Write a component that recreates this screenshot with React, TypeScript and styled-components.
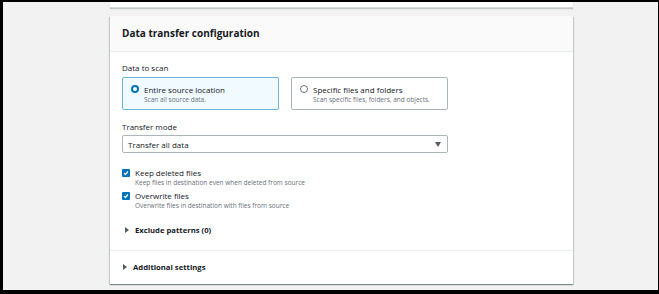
import React, { useState } from 'react';
import styled, { createGlobalStyle } from 'styled-components';

const GlobalStyle = createGlobalStyle`
  html, body {
    margin: 0;
    padding: 0;
    background: #000;
  }
  body {
    font-family: "Open Sans", "Liberation Sans", Arial, sans-serif;
    color: #16191f;
  }
`;

const Frame = styled.div`
  width: 659px;
  height: 294px;
  box-sizing: border-box;
  padding: 2px 1px 4px 3px;
  background: #000;
`;

const Page = styled.div`
  height: 100%;
  background: #f2f2f2;
  padding-left: 107px;
  box-sizing: border-box;
  overflow: hidden;
  display: flex;
  flex-direction: column;
`;

const PrevCard = styled.div`
  width: 463px;
  height: 5px;
  background: #fff;
  border-bottom: 1px solid #d5dbdb;
  box-shadow: 0 1px 1px rgba(0, 27, 42, 0.2);
`;

const Card = styled.section`
  width: 463px;
  margin-top: 8px;
  background: #fff;
  box-shadow: 0 1px 1px 0 rgba(0, 28, 36, 0.3), 1px 1px 1px 0 rgba(0, 28, 36, 0.15), -1px 1px 1px 0 rgba(0, 28, 36, 0.15);
  display: flex;
  flex-direction: column;
`;

const CardHeader = styled.header`
  height: 36px;
  box-sizing: border-box;
  padding: 0 12px 2px;
  display: flex;
  align-items: center;
  background: #fafafa;
  border-bottom: 1px solid #eaeded;
`;

const Title = styled.h2`
  margin: 0;
  font-size: 10px;
  line-height: 14px;
  font-weight: 700;
`;

const Body = styled.div`
  padding: 10px 12px 14px;
  display: flex;
  flex-direction: column;
`;

const Label = styled.div`
  font-size: 8px;
  line-height: 12px;
  margin-bottom: ${(p: { $gap?: number }) => p.$gap ?? 2}px;
`;

const Tiles = styled.div`
  display: grid;
  grid-template-columns: 157px 157px;
  gap: 12px;
  margin-bottom: 11px;
`;

const Tile = styled.label<{ $active: boolean }>`
  height: 33px;
  box-sizing: border-box;
  border: 1px solid ${p => (p.$active ? '#6cb6de' : '#aab7b8')};
  background: ${p => (p.$active ? '#f1faff' : '#fff')};
  border-radius: 2px;
  padding: 6px 8px;
  display: flex;
  gap: 5px;
  cursor: pointer;
`;

const Radio = styled.span<{ $checked: boolean }>`
  flex: none;
  width: 8px;
  height: 8px;
  margin-top: 1px;
  border-radius: 50%;
  box-sizing: border-box;
  border: ${p => (p.$checked ? '2.5px solid #0073bb' : '1px solid #687078')};
  background: #fff;
`;

const TileText = styled.div`
  display: flex;
  flex-direction: column;
`;

const TileTitle = styled.span`
  font-size: 8px;
  line-height: 11px;
`;

const Hint = styled.span`
  font-size: 6.5px;
  line-height: 10px;
  color: #687078;
`;

const Select = styled.div`
  width: 326px;
  height: 18px;
  box-sizing: border-box;
  border: 1px solid #aab7b8;
  border-radius: 2px;
  padding: 0 6px 0 5px;
  display: flex;
  align-items: center;
  justify-content: space-between;
  font-size: 8px;
  margin-bottom: 14px;
`;

const Caret = styled.span`
  width: 0;
  height: 0;
  border-left: 3.5px solid transparent;
  border-right: 3.5px solid transparent;
  border-top: 5px solid #545b64;
`;

const CheckRow = styled.label`
  display: flex;
  gap: 5px;
  margin-bottom: 2px;
`;

const Box = styled.span`
  flex: none;
  width: 8px;
  height: 8px;
  margin-top: 2px;
  border-radius: 1px;
  background: #0073bb;
  display: flex;
  align-items: center;
  justify-content: center;
`;

const CheckText = styled.div`
  display: flex;
  flex-direction: column;
`;

const Expander = styled.div<{ $indent: number }>`
  display: flex;
  align-items: center;
  gap: 6px;
  padding-left: ${p => p.$indent}px;
  font-size: 7.7px;
  font-weight: 700;
  color: #16191f;
  height: 12px;
`;

const Triangle = styled.span`
  width: 0;
  height: 0;
  border-top: 3px solid transparent;
  border-bottom: 3px solid transparent;
  border-left: 4px solid #545b64;
`;

const Spacer = styled.div`
  height: 11px;
`;

const Footer = styled.div`
  border-top: 1px solid #eaeded;
  padding: 10px 12px 11px;
`;

const options = [
  { id: 'all', title: 'Entire source location', hint: 'Scan all source data.' },
  { id: 'specific', title: 'Specific files and folders', hint: 'Scan specific files, folders, and objects.' },
];

const checks = [
  { title: 'Keep deleted files', hint: 'Keep files in destination even when deleted from source' },
  { title: 'Overwrite files', hint: 'Overwrite files in destination with files from source' },
];

const Tick = () => (
  <svg width="6" height="6" viewBox="0 0 6 6">
    <path d="M1 3.1 L2.4 4.5 L5 1.5" fill="none" stroke="#fff" strokeWidth="1.2" />
  </svg>
);

export default function App() {
  const [scan, setScan] = useState('all');

  return (
    <Frame>
      <GlobalStyle />
      <Page>
        <PrevCard />
        <Card>
          <CardHeader>
            <Title>Data transfer configuration</Title>
          </CardHeader>
          <Body>
            <Label $gap={3}>Data to scan</Label>
            <Tiles>
              {options.map(o => (
                <Tile key={o.id} $active={scan === o.id} onClick={() => setScan(o.id)}>
                  <Radio $checked={scan === o.id} />
                  <TileText>
                    <TileTitle>{o.title}</TileTitle>
                    <Hint>{o.hint}</Hint>
                  </TileText>
                </Tile>
              ))}
            </Tiles>
            <Label>Transfer mode</Label>
            <Select>
              <span>Transfer all data</span>
              <Caret />
            </Select>
            {checks.map(c => (
              <CheckRow key={c.title}>
                <Box>
                  <Tick />
                </Box>
                <CheckText>
                  <TileTitle>{c.title}</TileTitle>
                  <Hint>{c.hint}</Hint>
                </CheckText>
              </CheckRow>
            ))}
            <Spacer />
            <Expander $indent={3}>
              <Triangle />
              Exclude patterns (0)
            </Expander>
          </Body>
          <Footer>
            <Expander $indent={1}>
              <Triangle />
              Additional settings
            </Expander>
          </Footer>
        </Card>
      </Page>
    </Frame>
  );
}
